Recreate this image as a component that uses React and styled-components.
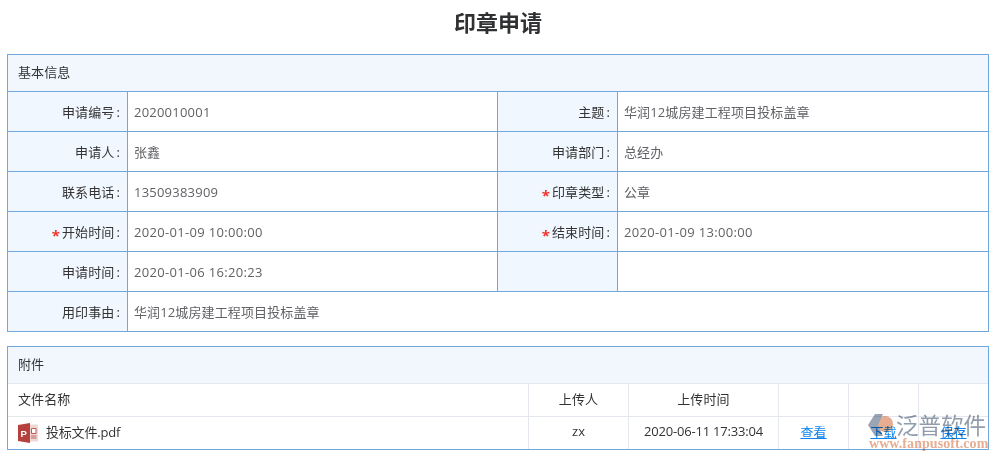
import React from 'react';
import styled, { createGlobalStyle } from 'styled-components';

const GlobalStyle = createGlobalStyle`
  html, body {
    margin: 0;
    padding: 0;
    background: #fff;
  }
  body {
    font-family: "Open Sans", "Noto Sans CJK SC", sans-serif;
    font-size: 13px;
    letter-spacing: 0.12px;
    color: #333;
  }
`;

const Page = styled.div`
  position: relative;
  width: 997px;
  height: 458px;
  overflow: hidden;
  box-sizing: border-box;
  padding: 0 8px 0 7px;
`;

const Title = styled.h1`
  margin: 0;
  height: 54px;
  line-height: 44px;
  text-align: center;
  font-size: 22px;
  font-weight: 700;
  letter-spacing: 0;
  color: #303133;
`;

const Panel = styled.section`
  border: 1px solid #6fa8dc;
  margin-bottom: 14px;
`;

const PanelHeader = styled.div`
  height: 36px;
  line-height: 34px;
  padding-left: 10px;
  background: #f2f7fe;
  color: #333;
  border-bottom: 1px solid ${p => (p.$soft ? '#e4e7ed' : '#6fa8dc')};
`;

const FormRow = styled.div`
  display: grid;
  grid-template-columns: ${p => (p.$wide ? '120px 1fr' : '120px 369px 121px 1fr')};
  height: 40px;
  box-sizing: border-box;
  border-bottom: 1px solid #6fa8dc;
  &:last-child {
    border-bottom: 0;
    height: 39px;
  }
`;

const Label = styled.div`
  background: #f0f7ff;
  border-right: 1px solid #6fa8dc;
  border-left: ${p => (p.$inner ? '1px solid #6fa8dc' : '0')};
  box-sizing: border-box;
  padding: 1px 7px 0 0;
  text-align: right;
  line-height: 38px;
  color: #333;
`;

const Colon = styled.span`
  margin-left: 2px;
`;

const Star = styled.span`
  display: inline-block;
  color: #f0342a;
  font-size: 15px;
  font-weight: 700;
  line-height: 1;
  margin-right: 2px;
  vertical-align: -4px;
`;

const Value = styled.div`
  box-sizing: border-box;
  padding: 1px 0 0 6px;
  line-height: 38px;
  letter-spacing: ${p => (p.$stamp ? '0.32px' : p.$num ? '0.22px' : '0.12px')};
  color: #606266;
`;

const FileRow = styled.div`
  display: grid;
  grid-template-columns: 521px 100px 150px 70px 70px 1fr;
  height: 33px;
  box-sizing: border-box;
  border-bottom: 1px solid #e4e7ed;
  &:last-child {
    border-bottom: 0;
    height: 32px;
  }
`;

const FileCell = styled.div`
  display: flex;
  align-items: center;
  justify-content: ${p => (p.$left ? 'flex-start' : 'center')};
  gap: 8px;
  padding-left: ${p => (p.$left ? '10px' : '0')};
  padding-bottom: 4px;
  border-right: 1px solid #e4e7ed;
  letter-spacing: ${p => (p.$tight ? '-0.2px' : '0.12px')};
  color: #333;
  &:last-child {
    border-right: 0;
  }
`;

const FileLink = styled.a`
  color: #0d84ee;
  text-decoration: underline;
`;

const FileIcon = styled.svg`
  flex-shrink: 0;
  margin-top: 4px;
`;

const Watermark = styled.div`
  position: absolute;
  left: 867px;
  top: 413px;
  width: 124px;
  pointer-events: none;
  opacity: 0.75;
  mix-blend-mode: multiply;
`;

const MarkTop = styled.div`
  display: flex;
  align-items: center;
  height: 25px;
`;

const MarkLogo = styled.svg`
  flex-shrink: 0;
`;

const MarkName = styled.span`
  font-size: 22.5px;
  line-height: 25px;
  letter-spacing: 0;
  color: #6b7b8f;
  white-space: nowrap;
`;

const MarkUrl = styled.div`
  padding-left: 2px;
  font-family: "Liberation Serif", serif;
  font-size: 14px;
  font-weight: 700;
  line-height: 11px;
  letter-spacing: 0.07px;
  color: #e0916c;
  white-space: nowrap;
`;

const PptIcon = () => (
  <FileIcon width="20" height="20" viewBox="0 0 20 20">
    <path d="M11 1.5h8a1 1 0 0 1 1 1v15a1 1 0 0 1-1 1h-8z" fill="#ecd9d6" />
    <path d="M13 12.5h5.5v1H13zM13 14.5h5.5v1H13z" fill="#c0635c" />
    <path d="M13.5 5.5h4.5v5h-4.5z" fill="#fff" stroke="#c9564d" />
    <path d="M0 2 12 0v20L0 18z" fill="#b5403c" />
    <text x="2.6" y="13.5" fontFamily="Liberation Sans" fontSize="9.5" fontWeight="700" fill="#fff">P</text>
  </FileIcon>
);

const LogoMark = () => (
  <MarkLogo width="29" height="25" viewBox="0 0 29 25">
    <circle cx="18" cy="11" r="8" fill="#e0916c" />
    <path d="M8 1h8L11 12l5 11H8L1 12z" fill="#77879c" />
  </MarkLogo>
);

const Field = ({ required, children }) => (
  <>
    {required && <Star>*</Star>}
    {children}
    <Colon>:</Colon>
  </>
);

const App = () => {
  return (
    <>
      <GlobalStyle />
      <Page>
        <Title>印章申请</Title>
        <Panel>
          <PanelHeader>基本信息</PanelHeader>
          <FormRow>
            <Label><Field>申请编号</Field></Label>
            <Value $num>2020010001</Value>
            <Label $inner><Field>主题</Field></Label>
            <Value>华润12城房建工程项目投标盖章</Value>
          </FormRow>
          <FormRow>
            <Label><Field>申请人</Field></Label>
            <Value>张鑫</Value>
            <Label $inner><Field>申请部门</Field></Label>
            <Value>总经办</Value>
          </FormRow>
          <FormRow>
            <Label><Field>联系电话</Field></Label>
            <Value $num>13509383909</Value>
            <Label $inner><Field required>印章类型</Field></Label>
            <Value>公章</Value>
          </FormRow>
          <FormRow>
            <Label><Field required>开始时间</Field></Label>
            <Value $stamp>2020-01-09 10:00:00</Value>
            <Label $inner><Field required>结束时间</Field></Label>
            <Value $stamp>2020-01-09 13:00:00</Value>
          </FormRow>
          <FormRow>
            <Label><Field>申请时间</Field></Label>
            <Value $stamp>2020-01-06 16:20:23</Value>
            <Label $inner />
            <Value />
          </FormRow>
          <FormRow $wide>
            <Label><Field>用印事由</Field></Label>
            <Value>华润12城房建工程项目投标盖章</Value>
          </FormRow>
        </Panel>
        <Panel>
          <PanelHeader $soft>附件</PanelHeader>
          <FileRow>
            <FileCell $left>文件名称</FileCell>
            <FileCell>上传人</FileCell>
            <FileCell>上传时间</FileCell>
            <FileCell />
            <FileCell />
            <FileCell />
          </FileRow>
          <FileRow>
            <FileCell $left $tight><PptIcon />投标文件.pdf</FileCell>
            <FileCell>zx</FileCell>
            <FileCell $tight>2020-06-11 17:33:04</FileCell>
            <FileCell><FileLink>查看</FileLink></FileCell>
            <FileCell><FileLink>下载</FileLink></FileCell>
            <FileCell><FileLink>保存</FileLink></FileCell>
          </FileRow>
        </Panel>
        <Watermark>
          <MarkTop>
            <LogoMark />
            <MarkName>泛普软件</MarkName>
          </MarkTop>
          <MarkUrl>www.fanpusoft.com</MarkUrl>
        </Watermark>
      </Page>
    </>
  );
};

export default App;
